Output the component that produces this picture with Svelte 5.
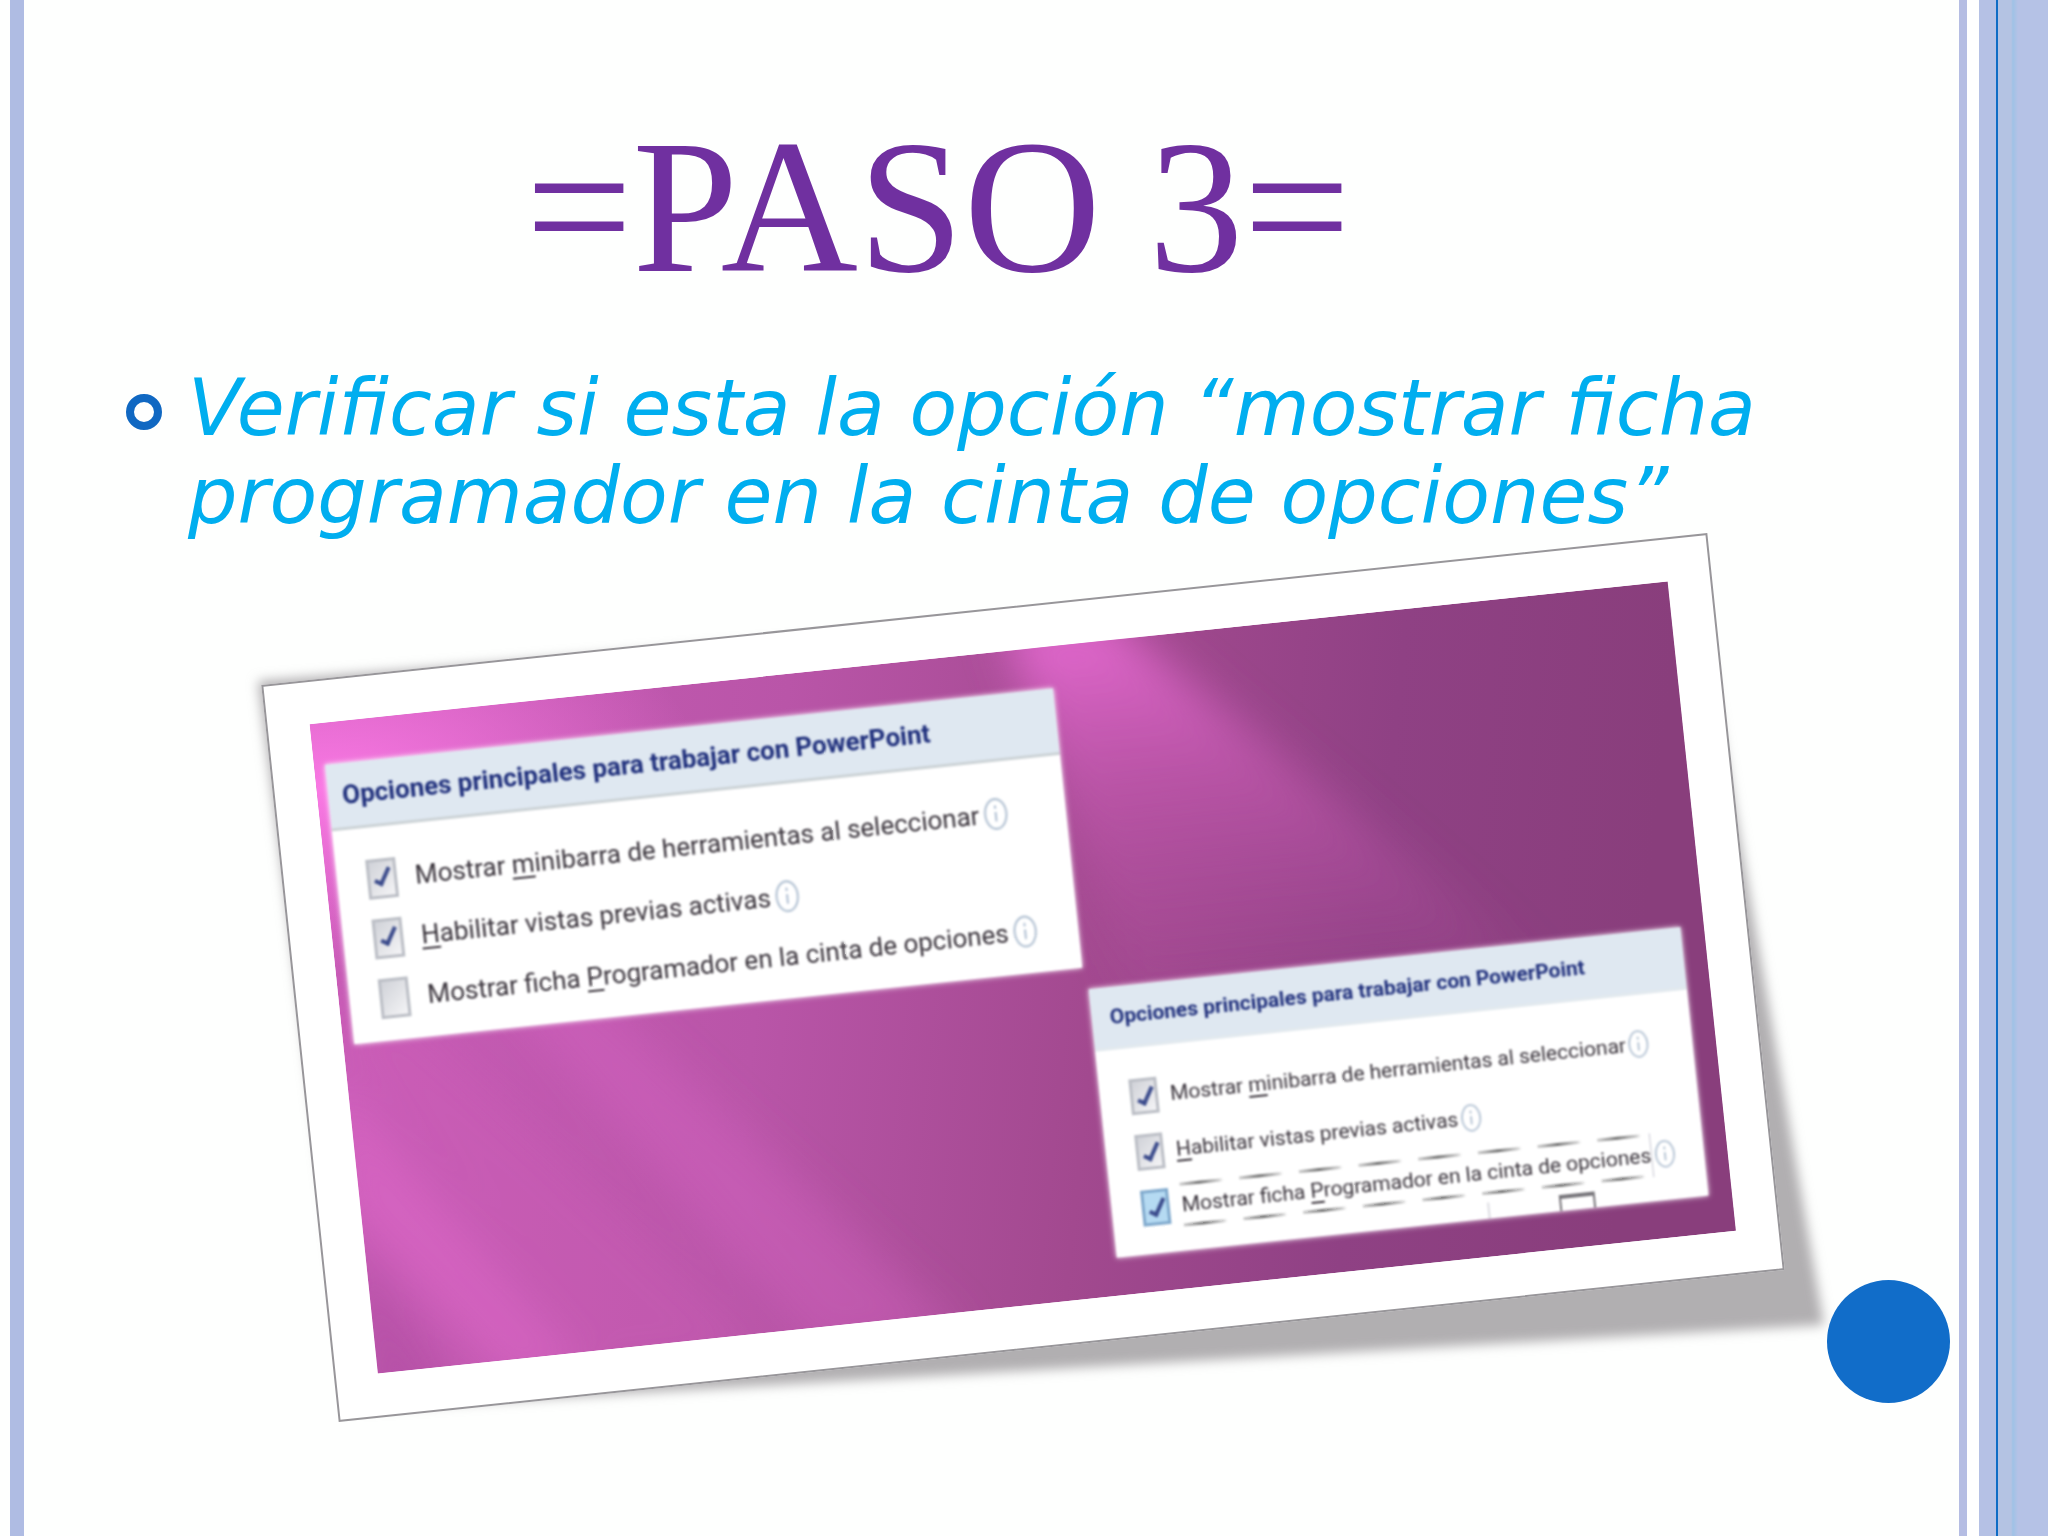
<script lang="ts">
  interface Option {
    id: string;
    before: string;
    key: string;
    after: string;
    checked: boolean;
    focused?: boolean;
  }

  interface Panel {
    name: string;
    options: Option[];
  }

  const title = "Opciones principales para trabajar con PowerPoint";

  function buildOptions(prefix: string, showTab: boolean): Option[] {
    return [
      { id: prefix + "-bar", before: "Mostrar ", key: "m", after: "inibarra de herramientas al seleccionar", checked: true },
      { id: prefix + "-live", before: "", key: "H", after: "abilitar vistas previas activas", checked: true },
      { id: prefix + "-tab", before: "Mostrar ficha ", key: "P", after: "rogramador en la cinta de opciones", checked: showTab, focused: showTab },
    ];
  }

  let panels: Panel[] = $state([
    { name: "large", options: buildOptions("before", false) },
    { name: "small", options: buildOptions("after", true) },
  ]);
</script>

<div class="slide">
  <div class="rail left"></div>

  <main>
    <h1>=PASO 3=</h1>

    <ul>
      <li>
        <span class="bullet"></span>
        <p>Verificar si esta la opción “mostrar ficha programador en la cinta de opciones”</p>
      </li>
    </ul>

    <figure>
      <svg class="shadow" viewBox="0 0 1600 940" aria-hidden="true">
        <defs>
          <filter id="soft" x="-5%" y="-5%" width="110%" height="110%">
            <feGaussianBlur stdDeviation="6" />
          </filter>
        </defs>
        <path d="M14 122 L1450 14 L1580 766 L108 850 Z" fill="#b1afb1" filter="url(#soft)" />
      </svg>

      <div class="photo">
        <svg class="backdrop" viewBox="0 0 1367 653" preserveAspectRatio="none" aria-hidden="true">
          <defs>
            <linearGradient id="base" x1="0" y1="0" x2="1" y2="0.1">
              <stop offset="0" stop-color="#ca5cb8" />
              <stop offset="0.35" stop-color="#b955a8" />
              <stop offset="0.6" stop-color="#a2498f" />
              <stop offset="0.8" stop-color="#8f4184" />
              <stop offset="1" stop-color="#893e7c" />
            </linearGradient>
            <radialGradient id="glow" cx="0" cy="0.1" r="0.28">
              <stop offset="0" stop-color="#fa78e4" />
              <stop offset="1" stop-color="#fa78e4" stop-opacity="0" />
            </radialGradient>
            <linearGradient id="ray" x1="0" y1="0" x2="0" y2="1">
              <stop offset="0" stop-color="#e66ad2" />
              <stop offset="0.4" stop-color="#c459b0" stop-opacity="0.7" />
              <stop offset="1" stop-color="#b04e9e" stop-opacity="0" />
            </linearGradient>
            <filter id="blur" x="-30%" y="-30%" width="160%" height="160%">
              <feGaussianBlur stdDeviation="22" />
            </filter>
          </defs>
          <rect width="1367" height="653" fill="url(#base)" />
          <rect width="1367" height="653" fill="url(#glow)" />
          <g filter="url(#blur)">
            <path d="M700 -30 L800 -30 L1230 400 L800 400 Z" fill="url(#ray)" />
            <path d="M150 270 L230 270 L590 680 L440 680 Z" fill="#d865c2" opacity="0.4" />
            <path d="M-20 290 L60 290 L400 680 L200 680 Z" fill="#d060bb" opacity="0.3" />
            <path d="M-20 340 L20 400 L210 680 L130 680 L-20 480 Z" fill="#dd68c8" opacity="0.6" />
            <path d="M-20 500 L90 700 L-20 700 Z" fill="#ae4c9f" opacity="0.6" />
          </g>
        </svg>

        {#each panels as panel}
          <section class="panel {panel.name}">
            <h2>{title}</h2>
            <div class="options">
              {#each panel.options as option}
                <div class="option">
                  <input type="checkbox" id={option.id} class:focused={option.focused} bind:checked={option.checked} />
                  <label for={option.id} class:focused={option.focused}>{option.before}<u>{option.key}</u>{option.after}</label>
                  <svg class="info" viewBox="0 0 24 32" aria-hidden="true">
                    <ellipse cx="12" cy="16" rx="10" ry="14" />
                    <path d="M12 14 V23 M12 8 V11" />
                  </svg>
                </div>
              {/each}
            </div>
            {#if panel.name === "small"}
              <div class="next-row"><span></span></div>
            {/if}
          </section>
        {/each}
      </div>
    </figure>
  </main>

  <div class="dot"></div>
  <div class="rail right"></div>
</div>

<style>
  :global(body) { margin: 0; background: #fefffe; }

  .slide {
    display: grid;
    grid-template-columns: 24px 1fr 90px;
    min-height: 100vh;
    position: relative;
    overflow: hidden;
  }
  .rail.left { background: linear-gradient(90deg, transparent 10px, #afbce3 10px); }
  .rail.right {
    grid-column: 3;
    background: linear-gradient(
      90deg,
      transparent 1px, #b5bde3 1px, #b5bde3 9px,
      #fff 9px, #fff 21px,
      #b5c1e5 21px, #b5c1e5 38px,
      #0f6cc5 38px, #0f6cc5 40px,
      #b4c3e3 40px, #b4c3e3 53px,
      #9fc2e6 55px, #b5c2e6 60px
    );
  }

  main { grid-column: 2; grid-row: 1; }

  h1 {
    margin: 0;
    padding: 96px 106px 0 0;
    font: 400 190px/222px "Liberation Serif", serif;
    color: #7030a0;
    text-align: center;
  }

  ul {
    margin: 0;
    padding: 46px 140px 0 102px;
    list-style: none;
  }
  li { display: flex; gap: 26px; }
  .bullet {
    box-sizing: border-box;
    flex: none;
    width: 36px;
    height: 36px;
    margin-top: 30px;
    border: 8px solid #1068c2;
    border-radius: 50%;
  }
  p {
    margin: 0;
    font: italic 400 78px/88px "DejaVu Sans", sans-serif;
    color: #00aeef;
  }

  figure {
    position: relative;
    width: calc(75% + 3px);
    margin: 67px 0 0 272px;
  }
  .shadow {
    position: absolute;
    top: -48px;
    left: -52px;
    width: 1600px;
    height: 940px;
    overflow: visible;
  }

  .photo {
    box-sizing: border-box;
    position: relative;
    display: flex;
    gap: 4px;
    height: 741px;
    padding: 84px 66px 80px 53px;
    border: 2px solid #98969a;
    background: #fff;
    transform: rotate(-6deg);
  }
  .backdrop {
    position: absolute;
    top: 42px;
    left: 42px;
    width: calc(100% - 84px);
    height: calc(100% - 84px);
  }

  .panel {
    position: relative;
    background: #fff;
    box-shadow: 0 0 5px #fff;
    filter: blur(1px);
    overflow: hidden;
  }
  .panel.large { flex: 733; height: 281px; }
  .panel.small { flex: 595; height: 270px; align-self: flex-end; }

  h2 {
    margin: 0;
    padding-left: 14px;
    background: #dfe8f1;
    border-bottom: 3px solid #ccd3d6;
    color: #1f2f7c;
    font: 700 26px/64px Roboto, sans-serif;
    white-space: nowrap;
  }
  .small h2 {
    padding-left: 18px;
    border-bottom-color: #e2e9ee;
    font-size: 21px;
    line-height: 60px;
  }

  .options { padding: 22px 0 0 30px; }
  .small .options { padding-top: 21px; }
  .option {
    display: flex;
    align-items: center;
    height: 60px;
    font: 400 26px/36px Roboto, sans-serif;
    color: #38323a;
    white-space: nowrap;
  }
  .small .option { height: 56px; font-size: 21px; }

  input {
    appearance: none;
    box-sizing: border-box;
    position: relative;
    flex: none;
    width: 30px;
    height: 40px;
    margin: 0 18px 0 0;
    border: 3px solid #bcbfc6;
    background: linear-gradient(135deg, #d0d2d8, #f4f4f6);
  }
  .small input { width: 28px; height: 36px; margin-right: 12px; }
  input:checked::after {
    content: "";
    position: absolute;
    top: 4px;
    left: 8px;
    width: 5px;
    height: 16px;
    border: solid #3b4b8c;
    border-width: 0 4px 4px 0;
    transform: rotate(30deg);
  }
  input.focused { border-color: #7fa9cd; background: #b5daf2; }
  label.focused {
    --dashes: repeating-linear-gradient(90deg, #cfcfcf 0, #6f6f6f 20px, #cfcfcf 40px, #fff 44px, #fff 60px);
    padding: 4px 0;
    border-right: 1px solid #c9c9d2;
    background: var(--dashes) top / 100% 3px no-repeat, var(--dashes) bottom / 100% 3px no-repeat;
  }
  u { text-decoration-thickness: 2px; text-underline-offset: 4px; }

  .info {
    width: 26px;
    height: 34px;
    margin-left: 4px;
    fill: none;
    stroke: #b3c2d3;
    stroke-width: 2;
  }
  .small .info { width: 22px; height: 30px; margin-left: 2px; }

  /* top edge of the control below, cut off by the panel */
  .next-row {
    height: 16px;
    margin: 2px 0 0 374px;
    padding-left: 70px;
    border-left: 2px solid #dcdce2;
  }
  .next-row span {
    display: block;
    width: 32px;
    height: 16px;
    border: solid #77757a;
    border-width: 4px 2px 0;
  }

  .dot {
    position: absolute;
    right: 98px;
    bottom: 133px;
    width: 123px;
    height: 123px;
    border-radius: 50%;
    background: #116dc9;
  }
</style>
